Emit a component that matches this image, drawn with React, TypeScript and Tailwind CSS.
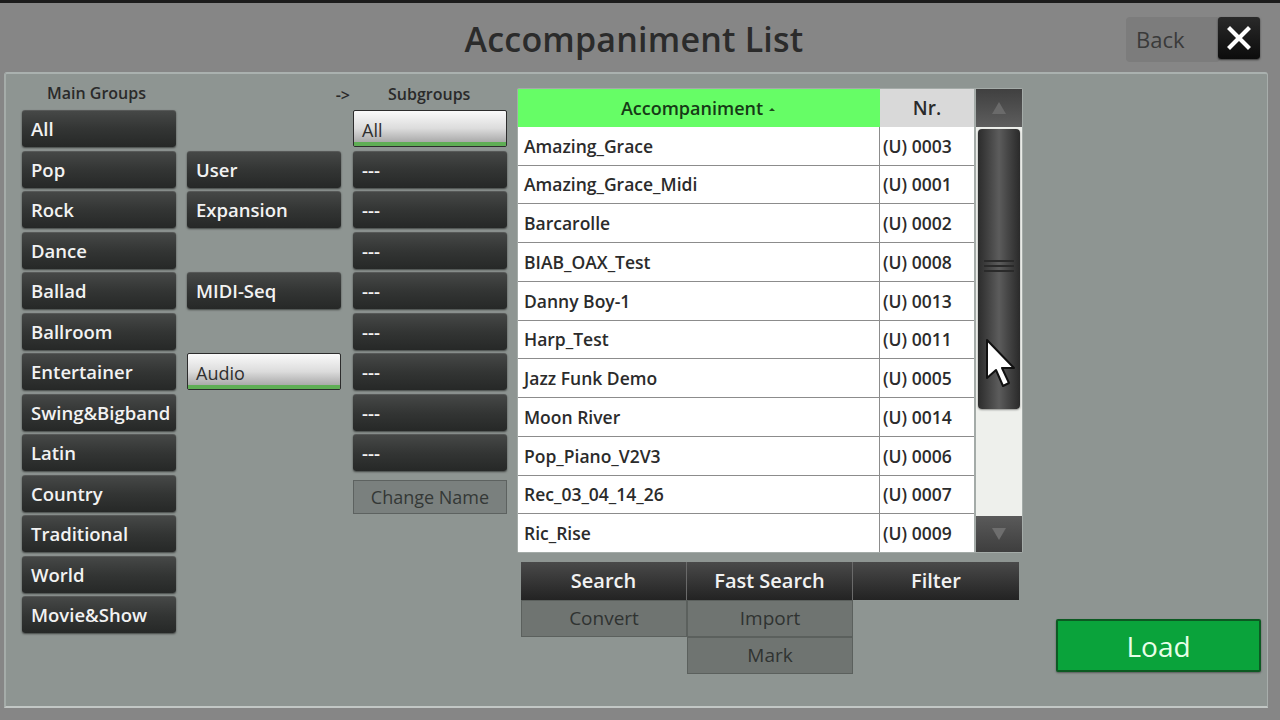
import React from "react";

const FONT = { fontFamily: '"Open Sans", "Noto Sans", sans-serif' };

function DarkBtn({ label }: { label: string }) {
  return (
    <div className="h-[37px] w-[154px] rounded-[3px] border-t border-[#575958] bg-gradient-to-b from-[#464847] via-[#333534] to-[#262827] shadow-[0_1px_2px_rgba(0,0,0,0.55)] flex items-center pl-[9px] text-[18.5px] font-semibold text-[#f2f2f2] whitespace-nowrap">
      {label}
    </div>
  );
}

function LightBtn({ label }: { label: string }) {
  return (
    <div className="h-[37px] w-[154px] rounded-[2px] border border-[#2c2c2c] bg-gradient-to-b from-[#fafafa] via-[#dcdcdc] to-[#9c9c9c] relative flex items-center pl-[8px] text-[18px] text-[#2f2f2f] whitespace-nowrap overflow-hidden">
      <span className="mt-[3px]">{label}</span>
      <div className="absolute left-0 right-0 bottom-0 h-[4px] bg-[#5fae55]" />
    </div>
  );
}

function Empty() {
  return <div className="h-[37px] w-[154px]" />;
}

const rows: [string, string][] = [
  ["Amazing_Grace", "(U) 0003"],
  ["Amazing_Grace_Midi", "(U) 0001"],
  ["Barcarolle", "(U) 0002"],
  ["BIAB_OAX_Test", "(U) 0008"],
  ["Danny Boy-1", "(U) 0013"],
  ["Harp_Test", "(U) 0011"],
  ["Jazz Funk Demo", "(U) 0005"],
  ["Moon River", "(U) 0014"],
  ["Pop_Piano_V2V3", "(U) 0006"],
  ["Rec_03_04_14_26", "(U) 0007"],
  ["Ric_Rise", "(U) 0009"],
];

const mainGroups = [
  "All",
  "Pop",
  "Rock",
  "Dance",
  "Ballad",
  "Ballroom",
  "Entertainer",
  "Swing&Bigband",
  "Latin",
  "Country",
  "Traditional",
  "World",
  "Movie&Show",
];

export default function App() {
  return (
    <div className="w-[1280px] h-[720px] bg-[#868686] flex flex-col overflow-hidden relative" style={FONT}>
      <div className="h-[3px] bg-[#1c1c1c]" />
      {/* header */}
      <div className="h-[69px] flex items-start relative">
        <div className="absolute left-0 right-[12px] top-[11px] text-center text-[34px] font-semibold text-[#2b2b2b] tracking-[0.2px]">
          Accompaniment List
        </div>
        <div className="ml-auto mr-[20px] mt-[14px] flex items-start relative">
          <div className="w-[94px] h-[45px] rounded-[4px] bg-[#7c7c7c] flex items-center pl-[10px] text-[22px] text-[#3a3a3a]">
            Back
          </div>
          <div className="w-[42px] h-[42px] -ml-[2px] rounded-[3px] bg-gradient-to-b from-[#2a2a2a] to-[#0c0c0c] shadow-[0_1px_2px_rgba(0,0,0,0.6)] flex items-center justify-center">
            <svg width="24" height="24" viewBox="0 0 24 24">
              <path d="M3 3 L21 21 M21 3 L3 21" stroke="#ffffff" strokeWidth="4.2" strokeLinecap="square" />
            </svg>
          </div>
        </div>
      </div>
      {/* panel */}
      <div className="ml-[4px] w-[1264px] h-[636px] rounded-t-[3px] border-t-2 border-l-2 border-b-2 border-r border-t-[#aab1af] border-l-[#a5aca9] border-b-[#c2c7c5] border-r-[#a8aeac] bg-[#8e9592] flex">
        {/* left columns */}
        <div className="flex pl-[16px] pt-[8px]">
          <div className="flex flex-col w-[154px]">
            <div className="h-[28px] text-[16px] font-semibold text-[#2a2a2a] pl-[25px] leading-[22px]">Main Groups</div>
            <div className="flex flex-col gap-y-[3.5px]">
              {mainGroups.map((g) => (
                <DarkBtn key={g} label={g} />
              ))}
            </div>
          </div>
          <div className="flex flex-col w-[154px] ml-[11px]">
            <div className="h-[28px] relative">
              <span className="absolute right-[-9px] top-[1px] text-[16px] font-semibold text-[#2a2a2a]">-&gt;</span>
            </div>
            <div className="flex flex-col gap-y-[3.5px]">
              <Empty />
              <DarkBtn label="User" />
              <DarkBtn label="Expansion" />
              <Empty />
              <DarkBtn label="MIDI-Seq" />
              <Empty />
              <LightBtn label="Audio" />
            </div>
          </div>
          <div className="flex flex-col w-[154px] ml-[12px]">
            <div className="h-[28px] text-[16px] font-semibold text-[#2a2a2a] pl-[35px] leading-[24px]">Subgroups</div>
            <div className="flex flex-col gap-y-[3.5px]">
              <LightBtn label="All" />
              {Array.from({ length: 8 }).map((_, i) => (
                <DarkBtn key={i} label="---" />
              ))}
            </div>
            <div className="mt-[9px] h-[34px] w-[154px] border border-[#5d6260] bg-[#7a807e] flex items-center justify-center text-[18px] text-[#343836]">
              Change Name
            </div>
          </div>
        </div>
        {/* table column */}
        <div className="ml-[10px] pt-[14px] flex flex-col">
          <div className="w-[506px] h-[465px] p-[1px] bg-[#a4aba8] rounded-[2px]">
            <div className="flex h-full">
              <div className="flex flex-col w-[456px]">
                <div className="flex h-[38px]">
                  <div className="w-[362px] bg-[#66fd66] flex items-center justify-center text-[18px] font-semibold text-[#163a16]">
                    Accompaniment
                    <svg width="10" height="8" viewBox="0 0 10 8" className="ml-[4px] mt-[1px]">
                      <path d="M2 6 L5 3 L8 6 Z" fill="#1e4a1e" />
                    </svg>
                  </div>
                  <div className="w-[94px] bg-[#d9d9d9] flex items-center justify-center text-[19px] font-semibold text-[#2a2a2a]">
                    Nr.
                  </div>
                </div>
                <div className="flex flex-col flex-1 bg-white">
                  {rows.map(([n, nr], i) => (
                    <div
                      key={n}
                      className={`flex flex-1 ${i < rows.length - 1 ? "border-b border-[#8c8c8c]" : ""}`}
                    >
                      <div className="w-[362px] border-r border-[#8c8c8c] flex items-center pl-[6px] text-[17.5px] font-semibold text-[#2b2b2b] whitespace-nowrap">
                        {n}
                      </div>
                      <div className="w-[94px] flex items-center pl-[3px] text-[17.5px] font-semibold text-[#2b2b2b] whitespace-nowrap">
                        {nr}
                      </div>
                    </div>
                  ))}
                </div>
              </div>
              {/* scrollbar */}
              <div className="ml-[2px] w-[46px] flex flex-col bg-[#eef0ec]">
                <div className="h-[38px] bg-gradient-to-b from-[#404040] to-[#5e5e5e] flex items-center justify-center">
                  <svg width="16" height="14" viewBox="0 0 16 14">
                    <path d="M8 1 L15 13 L1 13 Z" fill="#6a6a6a" />
                  </svg>
                </div>
                <div className="flex-1 relative">
                  <div className="mt-[2px] mx-[2px] h-[280px] rounded-[4px] bg-gradient-to-r from-[#2c2c2c] via-[#5c5c5c] to-[#2a2a2a] shadow-[0_1px_2px_rgba(0,0,0,0.4)] flex flex-col items-center pt-[131px]">
                    <div className="w-[30px] h-[2px] bg-[#2a2a2a]" />
                    <div className="w-[30px] h-[2px] bg-[#2a2a2a] mt-[3px]" />
                    <div className="w-[30px] h-[2px] bg-[#2a2a2a] mt-[3px]" />
                  </div>
                </div>
                <div className="h-[36px] bg-gradient-to-b from-[#5a5a5a] to-[#3e3e3e] flex items-center justify-center">
                  <svg width="16" height="14" viewBox="0 0 16 14">
                    <path d="M1 1 L15 1 L8 13 Z" fill="#6e6e6e" />
                  </svg>
                </div>
              </div>
            </div>
          </div>
          {/* buttons below table */}
          <div className="mt-[9px] ml-[4px] grid grid-cols-[166px_166px_166px]">
            <div className="h-[38px] bg-gradient-to-b from-[#4a4a4a] to-[#232323] flex items-center justify-center text-[20px] font-semibold text-[#f2f2f2] border-r border-[#6a6a6a]">
              Search
            </div>
            <div className="h-[38px] bg-gradient-to-b from-[#4a4a4a] to-[#232323] flex items-center justify-center text-[20px] font-semibold text-[#f2f2f2] border-r border-[#6a6a6a]">
              Fast Search
            </div>
            <div className="h-[38px] bg-gradient-to-b from-[#4a4a4a] to-[#232323] flex items-center justify-center text-[20px] font-semibold text-[#f2f2f2]">
              Filter
            </div>
            <div className="h-[37px] bg-[#6f7471] border border-[#5b605d] flex items-center justify-center text-[19px] text-[#2f3331]">
              Convert
            </div>
            <div className="h-[37px] bg-[#6f7471] border border-[#5b605d] flex items-center justify-center text-[19px] text-[#2f3331]">
              Import
            </div>
            <div />
            <div />
            <div className="h-[37px] bg-[#6f7471] border border-[#5b605d] flex items-center justify-center text-[19px] text-[#2f3331]">
              Mark
            </div>
          </div>
        </div>
        {/* right */}
        <div className="flex-1 flex flex-col items-end pr-[6px] pt-[545px]">
          <div className="w-[205px] h-[53px] rounded-[2px] border-2 border-[#0c5a22] bg-[#0aa33b] shadow-[0_1px_2px_rgba(0,0,0,0.4)] flex items-center justify-center text-[28px] text-[#e8ffe8]">
            Load
          </div>
        </div>
      </div>
      {/* cursor */}
      <svg className="absolute left-[985px] top-[338px]" width="32" height="52" viewBox="0 0 32 52">
        <path d="M2 2 L2 40 L11 32 L18 48 L24 45 L17 30 L29 30 Z" fill="#ffffff" stroke="#111111" strokeWidth="2" strokeLinejoin="round" />
      </svg>
    </div>
  );
}
